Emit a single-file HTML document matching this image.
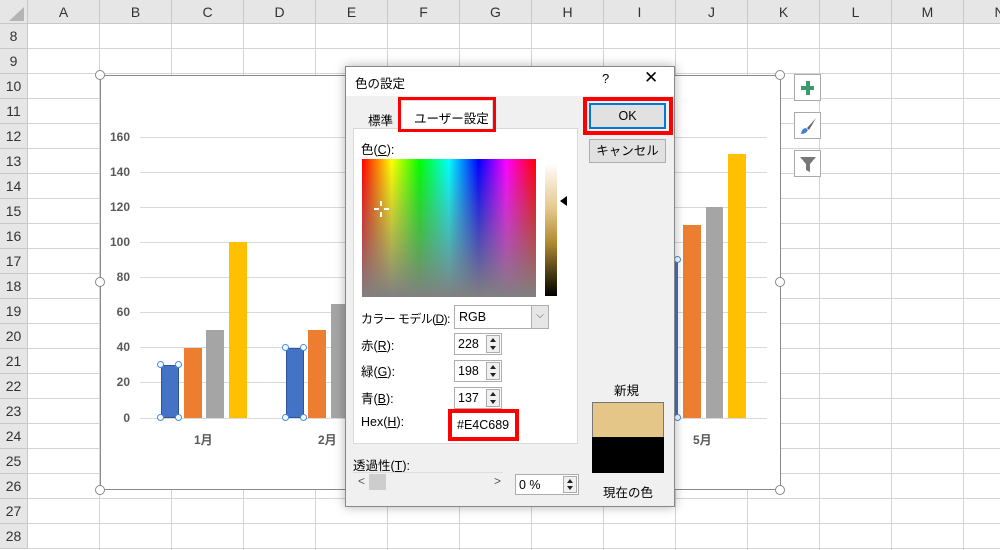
<!DOCTYPE html>
<html><head><meta charset="utf-8"><style>
*{margin:0;padding:0;box-sizing:border-box}
body{width:1000px;height:550px;overflow:hidden;background:#fff;font-family:"Liberation Sans","Noto Sans CJK JP",sans-serif;position:relative}
.a{position:absolute}
.grid{left:28px;top:24px;width:972px;height:526px;background-image:linear-gradient(to right,transparent 71px,#d4d4d4 71px),linear-gradient(to bottom,transparent 24px,#d4d4d4 24px);background-size:72px 25px;background-position:0 0}
.ch{top:0;height:24px;background:#e6e6e6;border-right:1px solid #c8c8c8;border-bottom:1px solid #c8c8c8;font-size:14px;color:#333;text-align:center;line-height:24px;width:72px}
.rh{left:0;width:28px;height:25px;background:#e6e6e6;border-bottom:1px solid #c8c8c8;border-right:1px solid #c8c8c8;font-size:14px;color:#333;text-align:center;line-height:25px}
.gl{height:1px;background:#d9d9d9;left:140px;width:627px}
.yl{font-size:12px;font-weight:bold;color:#595959;width:32px;text-align:right;left:98px}
.h{width:7px;height:7px;border-radius:50%;background:#fff;border:1.5px solid #3f8ee8}
.hc{width:10px;height:10px;border-radius:50%;background:#fff;border:1.5px solid #888}
.t{font-size:12.5px;color:#000}
.spin{width:48px;height:22px;border:1px solid #adadad;background:#fff;font-size:12.5px;padding:3px 0 0 3px}
.spin i{position:absolute;right:1px;top:1px;width:14px;height:18px;border:1px solid #adadad;background:#f0f0f0}
.spin i:before{content:"";position:absolute;left:3px;top:2px;border-left:3px solid transparent;border-right:3px solid transparent;border-bottom:4px solid #222}
.spin i:after{content:"";position:absolute;left:3px;bottom:2px;border-left:3px solid transparent;border-right:3px solid transparent;border-top:4px solid #222}
.ib{width:27px;height:27px;border:1px solid #aaa;background:#fff}
</style></head><body>
<div class="a grid"></div>
<div class="a" style="left:0;top:0;width:28px;height:24px;background:#e6e6e6;border-right:1px solid #c8c8c8;border-bottom:1px solid #c8c8c8"></div>
<div class="a" style="left:9px;top:7px;width:0;height:0;border-left:15px solid transparent;border-bottom:14px solid #b4b4b4"></div>
<div class="a ch" style="left:28px">A</div><div class="a ch" style="left:100px">B</div><div class="a ch" style="left:172px">C</div><div class="a ch" style="left:244px">D</div><div class="a ch" style="left:316px">E</div><div class="a ch" style="left:388px">F</div><div class="a ch" style="left:460px">G</div><div class="a ch" style="left:532px">H</div><div class="a ch" style="left:604px">I</div><div class="a ch" style="left:676px">J</div><div class="a ch" style="left:748px">K</div><div class="a ch" style="left:820px">L</div><div class="a ch" style="left:892px">M</div><div class="a ch" style="left:964px">N</div>
<div class="a rh" style="top:24px">8</div><div class="a rh" style="top:49px">9</div><div class="a rh" style="top:74px">10</div><div class="a rh" style="top:99px">11</div><div class="a rh" style="top:124px">12</div><div class="a rh" style="top:149px">13</div><div class="a rh" style="top:174px">14</div><div class="a rh" style="top:199px">15</div><div class="a rh" style="top:224px">16</div><div class="a rh" style="top:249px">17</div><div class="a rh" style="top:274px">18</div><div class="a rh" style="top:299px">19</div><div class="a rh" style="top:324px">20</div><div class="a rh" style="top:349px">21</div><div class="a rh" style="top:374px">22</div><div class="a rh" style="top:399px">23</div><div class="a rh" style="top:424px">24</div><div class="a rh" style="top:449px">25</div><div class="a rh" style="top:474px">26</div><div class="a rh" style="top:499px">27</div><div class="a rh" style="top:524px">28</div>

<div class="a" style="left:100px;top:75px;width:681px;height:415px;background:#fff;border:1px solid #8a8a8a"></div>
<div class="a gl" style="top:137px"></div><div class="a gl" style="top:172px"></div><div class="a gl" style="top:207px"></div><div class="a gl" style="top:242px"></div><div class="a gl" style="top:277px"></div><div class="a gl" style="top:312px"></div><div class="a gl" style="top:347px"></div><div class="a gl" style="top:382px"></div><div class="a gl" style="top:418px"></div>
<div class="a yl" style="top:130px">160</div><div class="a yl" style="top:165px">140</div><div class="a yl" style="top:200px">120</div><div class="a yl" style="top:235px">100</div><div class="a yl" style="top:270px">80</div><div class="a yl" style="top:305px">60</div><div class="a yl" style="top:340px">40</div><div class="a yl" style="top:375px">20</div><div class="a yl" style="top:411px">0</div>
<div class="a" style="left:161px;top:365px;width:18px;height:53px;background:#4472c4;border:1px solid #2f5597"></div>
<div class="a" style="left:184px;top:348px;width:18px;height:70px;background:#ed7d31"></div>
<div class="a" style="left:206px;top:330px;width:18px;height:88px;background:#a5a5a5"></div>
<div class="a" style="left:229px;top:242px;width:18px;height:176px;background:#ffc000"></div>
<div class="a" style="left:286px;top:348px;width:18px;height:70px;background:#4472c4;border:1px solid #2f5597"></div>
<div class="a" style="left:308px;top:330px;width:18px;height:88px;background:#ed7d31"></div>
<div class="a" style="left:331px;top:304px;width:18px;height:114px;background:#a5a5a5"></div>
<div class="a" style="left:675px;top:260px;width:3px;height:158px;background:#4472c4"></div>
<div class="a" style="left:683px;top:225px;width:18px;height:193px;background:#ed7d31"></div>
<div class="a" style="left:706px;top:207px;width:17px;height:211px;background:#a5a5a5"></div>
<div class="a" style="left:728px;top:154px;width:18px;height:264px;background:#ffc000"></div>
<div class="a h" style="left:157px;top:361px"></div><div class="a h" style="left:175px;top:361px"></div><div class="a h" style="left:157px;top:414px"></div><div class="a h" style="left:175px;top:414px"></div>
<div class="a h" style="left:282px;top:344px"></div><div class="a h" style="left:300px;top:344px"></div><div class="a h" style="left:282px;top:414px"></div><div class="a h" style="left:300px;top:414px"></div>
<div class="a h" style="left:674px;top:256px"></div><div class="a h" style="left:674px;top:414px"></div>
<div class="a" style="left:194px;top:431px;font-size:12px;font-weight:bold;color:#595959">1月</div>
<div class="a" style="left:318px;top:431px;font-size:12px;font-weight:bold;color:#595959">2月</div>
<div class="a" style="left:693px;top:431px;font-size:12px;font-weight:bold;color:#595959">5月</div>
<div class="a hc" style="left:95px;top:70px"></div><div class="a hc" style="left:775px;top:70px"></div><div class="a hc" style="left:95px;top:277px"></div><div class="a hc" style="left:775px;top:277px"></div><div class="a hc" style="left:95px;top:485px"></div><div class="a hc" style="left:775px;top:485px"></div>
<div class="a ib" style="left:794px;top:74px"><div class="a" style="left:6px;top:11px;width:13px;height:4px;background:#3d9a6c"></div><div class="a" style="left:10.5px;top:6px;width:4px;height:14px;background:#3d9a6c"></div></div>
<div class="a ib" style="left:794px;top:112px"><svg class="a" style="left:3px;top:3px" width="20" height="20"><path d="M18 2 L9 12 L11 14 Z" fill="#666"/><path d="M8 12 Q4 12 3 18 Q8 18 10 14 Z" fill="#3f7fd4"/></svg></div>
<div class="a ib" style="left:794px;top:150px"><svg class="a" style="left:3px;top:4px" width="20" height="20"><path d="M2 2 H18 L12 9 V17 L8 15 V9 Z" fill="#777"/></svg></div>

<div class="a" style="left:345px;top:66px;width:330px;height:441px;background:#f0f0f0;border:1px solid #888;box-shadow:0 0 10px rgba(0,0,0,.3)"></div>
<div class="a" style="left:346px;top:67px;width:328px;height:29px;background:#fff"></div>
<div class="a t" style="left:355px;top:73px">色の設定</div>
<div class="a" style="left:602px;top:71px;font-size:13px">?</div>
<div class="a" style="left:644px;top:68px;font-size:17px;font-weight:300">✕</div>
<div class="a t" style="left:368px;top:110px">標準</div>
<div class="a" style="left:353px;top:128px;width:225px;height:316px;background:#fff;border:1px solid #d9d9d9"></div>
<div class="a" style="left:400px;top:100px;width:93px;height:29px;background:#fff;border:1px solid #d9d9d9;border-bottom:none"></div>
<div class="a t" style="left:414px;top:108px">ユーザー設定</div>
<div class="a" style="left:398px;top:97px;width:98px;height:35px;border:3px solid #f00"></div>
<div class="a t" style="left:361px;top:139px">色(<u>C</u>):</div>
<div class="a" style="left:362px;top:159px;width:174px;height:138px;background:linear-gradient(to bottom,rgba(128,128,128,0),#808080),linear-gradient(to right,#f00,#ff0 17%,#0f0 33%,#0ff 50%,#00f 67%,#f0f 83%,#f00)"></div>
<div class="a" style="left:374px;top:208px;width:5px;height:2px;background:#fff"></div><div class="a" style="left:384px;top:208px;width:5px;height:2px;background:#fff"></div><div class="a" style="left:380px;top:201px;width:2px;height:5px;background:#fff"></div><div class="a" style="left:380px;top:212px;width:2px;height:5px;background:#fff"></div>
<div class="a" style="left:545px;top:163px;width:12px;height:133px;background:linear-gradient(#fff,#e4c689 35%,#b08a30 60%,#000)"></div>
<div class="a" style="left:560px;top:196px;width:0;height:0;border-top:5px solid transparent;border-bottom:5px solid transparent;border-right:7px solid #000"></div>
<div class="a t" style="left:361px;top:310px;font-size:12px;letter-spacing:-0.6px">カラー モデル(<u>D</u>):</div>
<div class="a" style="left:454px;top:305px;width:95px;height:24px;background:#fff;border:1px solid #adadad;font-size:12.5px;padding:4px 0 0 4px">RGB<div class="a" style="right:0;top:0;width:17px;height:22px;background:#e6e6e6;border-left:1px solid #adadad;font-size:10px;text-align:center;line-height:20px;color:#555">⌵</div></div>
<div class="a t" style="left:361px;top:335px">赤(<u>R</u>):</div>
<div class="a spin" style="left:454px;top:333px">228<i></i></div>
<div class="a t" style="left:361px;top:361px">緑(<u>G</u>):</div>
<div class="a spin" style="left:454px;top:360px">198<i></i></div>
<div class="a t" style="left:361px;top:388px">青(<u>B</u>):</div>
<div class="a spin" style="left:454px;top:387px">137<i></i></div>
<div class="a t" style="left:361px;top:415px">Hex(<u>H</u>):</div>
<div class="a" style="left:448px;top:409px;width:71px;height:32px;border:4px solid #f00;background:#fff;font-size:12.5px;padding:5px 0 0 5px">#E4C689</div>
<div class="a t" style="left:353px;top:455px">透過性(<u>T</u>):</div>
<div class="a" style="left:353px;top:472px;width:150px;height:1px;background:#ddd"></div>
<div class="a" style="left:358px;top:474px;font-size:12px;color:#555">&lt;</div>
<div class="a" style="left:369px;top:474px;width:17px;height:16px;background:#cdcdcd"></div>
<div class="a" style="left:494px;top:474px;font-size:12px;color:#555">&gt;</div>
<div class="a spin" style="left:515px;top:474px;width:64px;height:21px">0 %<i style="height:17px"></i></div>
<div class="a" style="left:583px;top:97px;width:90px;height:38px;border:4px solid #f00"></div>
<div class="a" style="left:589px;top:103px;width:77px;height:26px;background:#e1e1e1;border:2px solid #0078d7;font-size:12.5px;text-align:center;line-height:22px">OK</div>
<div class="a" style="left:589px;top:139px;width:77px;height:24px;background:#e1e1e1;border:1px solid #adadad;font-size:12.5px;text-align:center;line-height:22px">キャンセル</div>
<div class="a t" style="left:614px;top:380px">新規</div>
<div class="a" style="left:592px;top:402px;width:72px;height:35px;background:#e4c689;border:1px solid #777;border-bottom:none"></div>
<div class="a" style="left:592px;top:437px;width:72px;height:36px;background:#000"></div>
<div class="a t" style="left:603px;top:482px">現在の色</div>
</body></html>
